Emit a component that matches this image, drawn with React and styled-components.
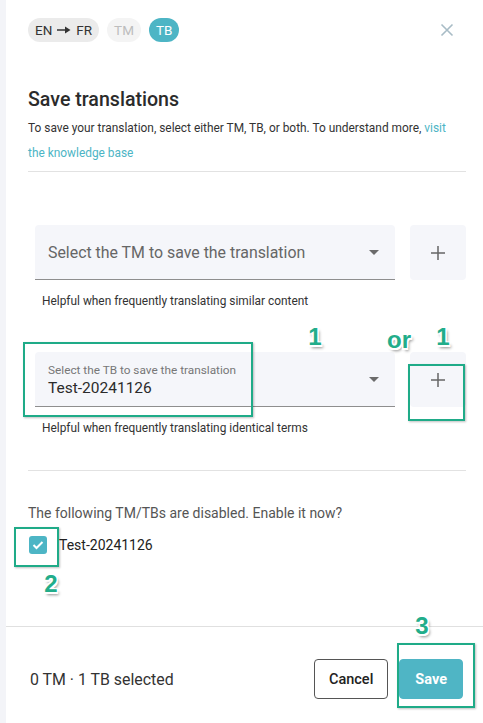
import React from 'react';
import styled, { createGlobalStyle } from 'styled-components';

const GlobalStyle = createGlobalStyle`
  html, body {
    margin: 0;
    padding: 0;
    background: #ffffff;
    font-family: Roboto, "Liberation Sans", Arial, sans-serif;
  }
`;

const Page = styled.div`
  position: relative;
  display: flex;
  width: 483px;
  height: 723px;
  overflow: hidden;
`;

const Strip = styled.div`
  width: 6px;
  background: #f3f4f8;
`;

const Panel = styled.div`
  flex: 1;
  display: flex;
  flex-direction: column;
  background: #fff;
`;

const Body = styled.div`
  flex: 1;
  padding: 18px 17px 0 22px;
`;

const Header = styled.div`
  display: flex;
  align-items: center;
  justify-content: space-between;
  height: 24px;
`;

const Chips = styled.div`
  display: flex;
  gap: 8px;
`;

const Chip = styled.span`
  display: inline-flex;
  align-items: center;
  gap: 5px;
  height: 24px;
  padding: 0 ${({ $pad }) => $pad || 7}px;
  border-radius: 12px;
  font-size: 13.5px;
  background: ${({ $variant }) =>
    $variant === 'active' ? '#4db5c5' : $variant === 'muted' ? '#f4f4f4' : '#ebebeb'};
  color: ${({ $variant }) =>
    $variant === 'active' ? '#fff' : $variant === 'muted' ? '#bdbdbd' : '#333'};
`;

const CloseBtn = styled.button`
  border: none;
  background: none;
  padding: 0;
  margin-right: 12px;
  width: 14px;
  height: 14px;
  display: flex;
`;

const Title = styled.h2`
  margin: 46px 0 0;
  font-size: 19.6px;
  line-height: 24px;
  font-weight: 500;
  color: #2b2b2b;
`;

const Desc = styled.p`
  margin: 4px 0 0;
  max-width: 428px;
  font-size: 11.9px;
  line-height: 25px;
  color: #333;
`;

const Link = styled.a`
  color: #4db5c5;
  text-decoration: none;
`;

const Divider = styled.hr`
  margin: ${({ $top }) => $top}px 0 0;
  border: none;
  border-top: 1px solid #e2e2e2;
`;

const Fields = styled.div`
  padding-left: 7px;
  margin-top: ${({ $top }) => $top}px;
`;

const FieldRow = styled.div`
  display: flex;
  gap: 15px;
  height: 55px;
`;

const Select = styled.div`
  flex: 1;
  display: flex;
  align-items: center;
  padding: 0 16px 0 13px;
  background: #f5f6fa;
  border-radius: 4px 4px 0 0;
  border-bottom: 1px solid #8e8e8e;
  box-sizing: border-box;
`;

const SelectText = styled.div`
  flex: 1;
  display: flex;
  flex-direction: column;
  padding-top: ${({ $filled }) => ($filled ? 3 : 0)}px;
`;

const Placeholder = styled.span`
  font-size: 15.9px;
  color: #666;
`;

const FloatLabel = styled.span`
  font-size: 11.8px;
  color: #777;
  line-height: 14px;
`;

const Value = styled.span`
  font-size: 15.5px;
  color: #2b2b2b;
  line-height: 22px;
`;

const Caret = styled.span`
  width: 0;
  height: 0;
  border-left: 5px solid transparent;
  border-right: 5px solid transparent;
  border-top: 5px solid #6b6b6b;
`;

const PlusBox = styled.button`
  width: 56px;
  border: none;
  border-radius: 4px;
  background: #f5f6fa;
  display: flex;
  align-items: center;
  justify-content: center;
  padding: 0;
`;

const Helper = styled.div`
  margin-top: 14px;
  padding-left: 7px;
  font-size: 11.9px;
  line-height: 14px;
  color: #333;
`;

const Spacer = styled.div`
  height: ${({ $h }) => $h}px;
`;

const Notice = styled.div`
  margin-top: 33px;
  font-size: 14px;
  line-height: 18px;
  color: #555;
`;

const CheckRow = styled.label`
  display: flex;
  align-items: center;
  gap: 12px;
  margin-top: 14px;
  padding-left: 1px;
  font-size: 14px;
  color: #222;
`;

const CheckBox = styled.span`
  width: 18px;
  height: 18px;
  border-radius: 3px;
  background: #4db5c5;
  display: flex;
  align-items: center;
  justify-content: center;
`;

const Footer = styled.div`
  display: flex;
  align-items: center;
  border-top: 1px solid #e0e0e0;
  padding: 32px 20px 24px 24px;
`;

const Summary = styled.span`
  flex: 1;
  font-size: 15.9px;
  color: #333;
`;

const Button = styled.button`
  height: 40px;
  padding: 0 ${({ $pad }) => $pad}px;
  border-radius: 4px;
  font-family: inherit;
  font-size: 14.5px;
  font-weight: ${({ $primary }) => ($primary ? 700 : 500)};
  border: 1px solid ${({ $primary }) => ($primary ? '#4fb5c5' : '#555')};
  background: ${({ $primary }) => ($primary ? '#4fb5c5' : '#fff')};
  color: ${({ $primary }) => ($primary ? '#fff' : '#222')};
  margin-left: ${({ $gap }) => $gap || 0}px;
`;

const Mark = styled.div`
  position: absolute;
  left: ${({ $x }) => $x}px;
  top: ${({ $y }) => $y}px;
  width: ${({ $w }) => $w}px;
  height: ${({ $h }) => $h}px;
  border: 2.5px solid #1fab88;
  box-sizing: border-box;
  box-shadow: 1px 1px 2px rgba(0, 0, 0, 0.25);
  pointer-events: none;
`;

const Note = styled.span`
  position: absolute;
  left: ${({ $x }) => $x}px;
  top: ${({ $y }) => $y}px;
  transform: translate(-50%, -50%);
  font-family: "Liberation Sans", Arial, sans-serif;
  font-weight: 700;
  font-size: ${({ $size }) => $size || 24}px;
  color: #22ad8a;
  text-shadow: -1.5px -1.5px 0 #fff, 1.5px -1.5px 0 #fff, -1.5px 1.5px 0 #fff,
    1.5px 1.5px 0 #fff, 2px 3px 3px rgba(0, 0, 0, 0.45);
  pointer-events: none;
`;

const Arrow = () => (
  <svg width="14" height="8" viewBox="0 0 14 8">
    <path d="M0 4h9" stroke="#333" strokeWidth="1.5" />
    <path d="M8 0.5L13.5 4L8 7.5z" fill="#333" />
  </svg>
);

const Plus = () => (
  <svg width="16" height="16" viewBox="0 0 16 16">
    <path d="M8 1v14M1 8h14" stroke="#666" strokeWidth="1.5" />
  </svg>
);

const Close = () => (
  <svg width="14" height="14" viewBox="0 0 14 14">
    <path d="M1.5 1.5l11 11M12.5 1.5l-11 11" stroke="#a8bcc6" strokeWidth="1.6" />
  </svg>
);

const Check = () => (
  <svg width="12" height="10" viewBox="0 0 12 10">
    <path d="M1.5 5l3 3L10.5 2" stroke="#fff" strokeWidth="2" fill="none" />
  </svg>
);

export default function App() {
  return (
    <>
      <GlobalStyle />
      <Page>
        <Strip />
        <Panel>
          <Body>
            <Header>
              <Chips>
                <Chip>
                  EN <Arrow /> FR
                </Chip>
                <Chip $variant="muted" $pad={7}>TM</Chip>
                <Chip $variant="active" $pad={7}>TB</Chip>
              </Chips>
              <CloseBtn aria-label="Close">
                <Close />
              </CloseBtn>
            </Header>

            <Title>Save translations</Title>
            <Desc>
              To save your translation, select either TM, TB, or both. To understand more,{' '}
              <Link href="#">visit the knowledge base</Link>
            </Desc>
            <Divider $top={5} />

            <Fields $top={53}>
              <FieldRow>
                <Select>
                  <SelectText>
                    <Placeholder>Select the TM to save the translation</Placeholder>
                  </SelectText>
                  <Caret />
                </Select>
                <PlusBox aria-label="Add TM">
                  <Plus />
                </PlusBox>
              </FieldRow>
              <Helper>Helpful when frequently translating similar content</Helper>

              <Spacer $h={44} />

              <FieldRow>
                <Select>
                  <SelectText $filled>
                    <FloatLabel>Select the TB to save the translation</FloatLabel>
                    <Value>Test-20241126</Value>
                  </SelectText>
                  <Caret />
                </Select>
                <PlusBox aria-label="Add TB">
                  <Plus />
                </PlusBox>
              </FieldRow>
              <Helper>Helpful when frequently translating identical terms</Helper>
            </Fields>

            <Divider $top={35} />

            <Notice>The following TM/TBs are disabled. Enable it now?</Notice>
            <CheckRow>
              <CheckBox>
                <Check />
              </CheckBox>
              Test-20241126
            </CheckRow>
          </Body>

          <Footer>
            <Summary>0 TM · 1 TB selected</Summary>
            <Button $pad={14}>Cancel</Button>
            <Button $primary $pad={15} $gap={11}>Save</Button>
          </Footer>
        </Panel>

        <Mark $x={23} $y={342} $w={230} $h={75} />
        <Mark $x={408} $y={364} $w={57} $h={57} />
        <Mark $x={14} $y={527} $w={45} $h={40} />
        <Mark $x={397} $y={643} $w={78} $h={65} />

        <Note $x={315} $y={337}>1</Note>
        <Note $x={399} $y={340}>or</Note>
        <Note $x={443} $y={337}>1</Note>
        <Note $x={51} $y={584}>2</Note>
        <Note $x={422} $y={626}>3</Note>
      </Page>
    </>
  );
}
